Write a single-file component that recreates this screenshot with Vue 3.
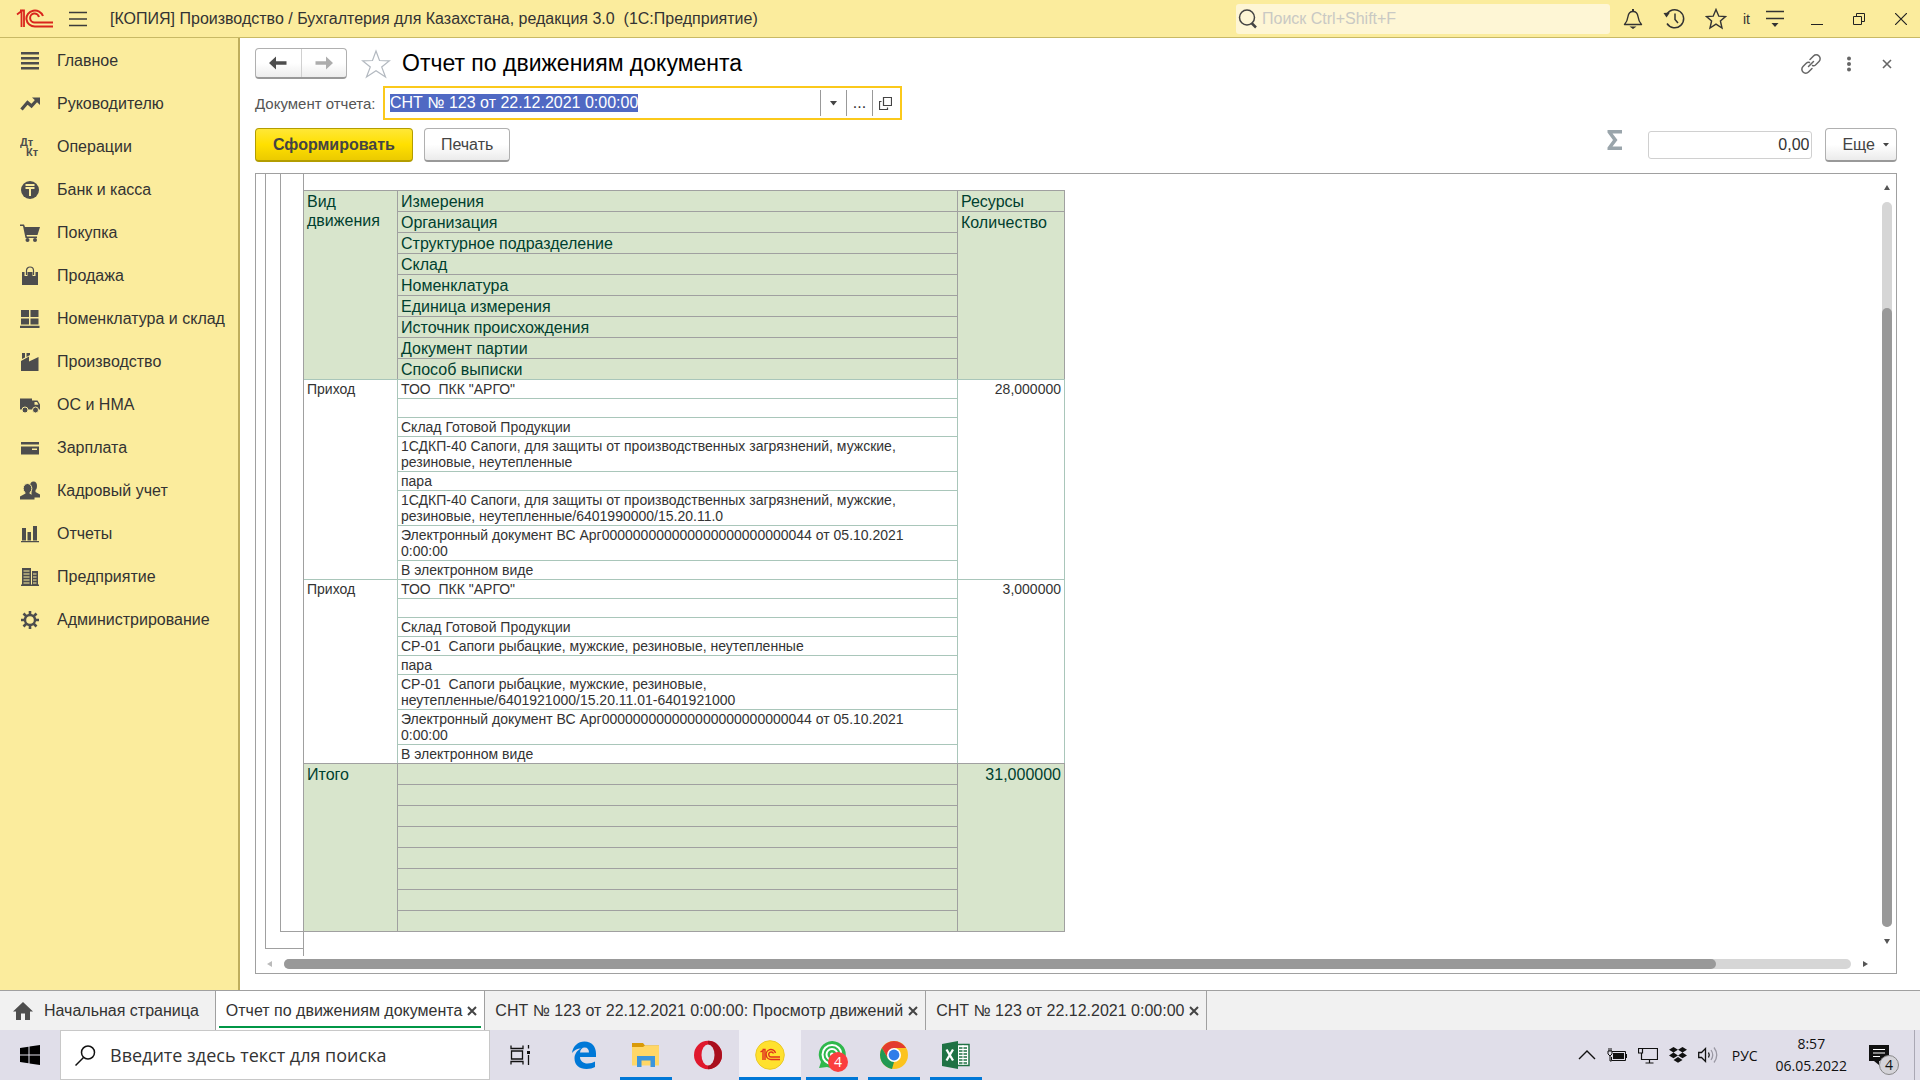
<template>
  <div class="desktop">
    <!-- Заголовок окна -->
    <header class="titlebar">
      <svg class="logo" width="38" height="20" viewBox="0 0 38 20" fill="none" stroke="#d9251d" stroke-width="2">
        <path d="M1 5.500 L5.500 2 V18 M4 1.500 H8 V18" stroke-width="1.800" />
        <path d="M27 7 A8.500 8 0 1 0 19 17.500 H37" />
        <path d="M23 8 A4.500 4.500 0 1 0 19 13.500 H37" />
      </svg>
      <button class="icon-btn burger" aria-label="Меню">
        <svg width="18" height="16" viewBox="0 0 18 16" stroke="#3b3b3b" stroke-width="1.300"><path d="M0 1.500H18M0 8H18M0 14.500H18" /></svg>
      </button>
      <h1 class="app-title">[КОПИЯ] Производство / Бухгалтерия для Казахстана, редакция 3.0&nbsp; (1С:Предприятие)</h1>
      <label class="global-search">
        <svg width="20" height="20" viewBox="0 0 20 20" fill="none" stroke="#444"><circle cx="9" cy="8.500" r="7.500" stroke-width="1.500" /><path d="M13.500 14L18 18.500" stroke-width="2.500" /></svg>
        <input type="text" placeholder="Поиск Ctrl+Shift+F" aria-label="Поиск" />
      </label>
      <nav class="window-tools">
        <button class="icon-btn" aria-label="Уведомления">
          <svg width="20" height="22" viewBox="0 0 20 22" fill="none" stroke="#333" stroke-width="1.400"><path d="M1.500 16.500C4 14 4.500 12 5 8.500C5.500 5 7 3.500 10 3.500S14.500 5 15 8.500C15.500 12 16 14 18.500 16.500Z" stroke-linejoin="round" /><path d="M10 1V4" stroke-width="2" /><path d="M6.500 18.500H13.500L10 21Z" fill="#333" stroke="none" /></svg>
        </button>
        <button class="icon-btn" aria-label="История">
          <svg width="22" height="22" viewBox="0 0 22 22" fill="none" stroke="#333" stroke-width="1.500"><path d="M3.500 7A9 9 0 1 1 4 15.500" /><path d="M12 5.500V11.500L15 15" /><path d="M0.500 5L7 4.500L3.500 9.500Z" fill="#333" stroke="none" /></svg>
        </button>
        <button class="icon-btn" aria-label="Избранное">
          <svg width="22" height="22" viewBox="0 0 22 22" fill="none" stroke="#333" stroke-width="1.400"><path d="M11 1.500L13.800 8.200L20.500 8.600L15.400 13L17 20L11 16.200L5 20L6.600 13L1.500 8.600L8.200 8.200Z" /></svg>
        </button>
        <span class="user">it</span>
        <button class="icon-btn" aria-label="Настройки">
          <svg width="18" height="18" viewBox="0 0 18 18" stroke="#333" stroke-width="1.400"><path d="M0 1.500H18M0 8.500H18" /><path d="M5.500 13H12.500L9 17Z" fill="#333" stroke="none" /></svg>
        </button>
        <button class="icon-btn wide" aria-label="Свернуть">
          <svg width="12" height="12" viewBox="0 0 12 12" stroke="#222"><path d="M0 11.500H12" /></svg>
        </button>
        <button class="icon-btn wide" aria-label="Восстановить">
          <svg width="12" height="12" viewBox="0 0 12 12" fill="none" stroke="#222"><path d="M0.500 3.500H8.500V11.500H0.500Z" /><path d="M3.500 3.500V0.500H11.500V8.500H8.500" /></svg>
        </button>
        <button class="icon-btn wide" aria-label="Закрыть">
          <svg width="12" height="12" viewBox="0 0 12 12" stroke="#222" stroke-width="1.200"><path d="M0 0L12 12M12 0L0 12" /></svg>
        </button>
      </nav>
    </header>

    <div class="workspace">
      <!-- Разделы -->
      <nav class="sidebar">
        <a v-for="item in sections" :key="item.title" href="#" class="section-link">
          <svg width="20" height="20" viewBox="0 0 20 20" fill="#4d4d4d" v-html="item.icon"></svg>
          <span>{{ item.title }}</span>
        </a>
      </nav>

      <main class="form">
        <div class="form-head">
          <div class="history-nav">
            <button aria-label="Назад">
              <svg width="18" height="14" viewBox="0 0 18 14"><path d="M0 7L7 0.500V5.200H17.500V8.800H7V13.500Z" fill="#4d4d4d" /></svg>
            </button>
            <button aria-label="Вперед">
              <svg width="18" height="14" viewBox="0 0 18 14"><path d="M18 7L11 0.500V5.200H0.500V8.800H11V13.500Z" fill="#adadad" /></svg>
            </button>
          </div>
          <button class="icon-btn fav" aria-label="В избранное">
            <svg width="30" height="30" viewBox="0 0 30 30" fill="#fff" stroke="#b3b9c0" stroke-width="1.200"><path d="M15 2L18.500 11.500L28.500 11.800L20.700 18L24.500 28L15 21.800L5.500 28L9.300 18L1.500 11.800L11.500 11.500Z" /></svg>
          </button>
          <h2>Отчет по движениям документа</h2>
          <div class="form-tools">
            <button class="icon-btn" aria-label="Ссылка">
              <svg width="20" height="20" viewBox="0 0 20 20" fill="none" stroke="#666" stroke-width="1.500" stroke-linecap="round"><path d="M9 5.500L12.500 2A3.700 3.700 0 0 1 18 7.500L14.500 11A3 3 0 0 1 11.500 11.500" /><path d="M11 14.500L7.500 18A3.700 3.700 0 0 1 2 12.500L5.500 9A3 3 0 0 1 8.500 8.500" /><path d="M7.500 12.500L12.500 7.500" /></svg>
            </button>
            <button class="icon-btn" aria-label="Еще действия">
              <svg width="6" height="16" viewBox="0 0 6 16" fill="#666"><circle cx="3" cy="2.500" r="2" /><circle cx="3" cy="8" r="2" /><circle cx="3" cy="13.500" r="2" /></svg>
            </button>
            <button class="icon-btn close" aria-label="Закрыть форму">
              <svg width="10" height="10" viewBox="0 0 10 10" stroke="#666" stroke-width="1.600"><path d="M1 1L9 9M9 1L1 9" /></svg>
            </button>
          </div>
        </div>

        <div class="param-row">
          <label for="doc">Документ отчета:</label>
          <div class="field">
            <input id="doc" ref="docInput" v-model="documentName" type="text" />
            <button aria-label="Выбрать из списка">
              <svg width="7" height="5" viewBox="0 0 7 5"><path d="M0 0H7L3.500 4.500Z" fill="#444" /></svg>
            </button>
            <button class="dots">...</button>
            <button aria-label="Открыть">
              <svg width="13" height="13" viewBox="0 0 13 13" fill="none" stroke="#444" stroke-width="1.200"><path d="M4.500 0.500H12.500V8.500H4.500Z" /><path d="M2.500 4.500H0.500V12.500H8.500V10.500" /></svg>
            </button>
          </div>
        </div>

        <div class="commands">
          <button class="btn primary">Сформировать</button>
          <button class="btn">Печать</button>
          <svg class="sigma" width="16" height="20" viewBox="0 0 16 20"><path d="M0.500 0H15V3.500H5.500L10.500 10L5.500 16.500H15V20H0.500V17.500L6 10L0.500 2.500Z" fill="#9aa5ab" /></svg>
          <input class="total" type="text" value="0,00" aria-label="Сумма" />
          <button class="btn more">Еще
            <svg width="6" height="4" viewBox="0 0 6 4"><path d="M0 0H6L3 3.500Z" fill="#444" /></svg>
          </button>
        </div>

        <!-- Табличный документ -->
        <section class="sheet">
          <div class="sheet-view">
            <div class="groups">
              <div class="group-outer">
                <div class="group-inner"></div>
              </div>
            </div>
            <div class="sheet-body">
              <table>
                <colgroup>
                  <col class="c-kind" />
                  <col class="c-dim" />
                  <col class="c-res" />
                </colgroup>
                <thead>
                  <tr v-for="(name, i) in dimensions" :key="name">
                    <th v-if="i === 0" :rowspan="dimensions.length">Вид движения</th>
                    <th>{{ name }}</th>
                    <th v-if="i === 0">Ресурсы</th>
                    <th v-if="i === 1" :rowspan="dimensions.length - 1">Количество</th>
                  </tr>
                </thead>
                <tbody v-for="(rec, r) in records" :key="r">
                  <tr v-for="(line, i) in rec.lines" :key="i">
                    <td v-if="i === 0" :rowspan="rec.lines.length">{{ rec.kind }}</td>
                    <td>{{ line }}</td>
                    <td v-if="i === 0" :rowspan="rec.lines.length" class="num">{{ rec.qty }}</td>
                  </tr>
                </tbody>
                <tfoot>
                  <tr v-for="n in 8" :key="n">
                    <td v-if="n === 1" rowspan="8">Итого</td>
                    <td></td>
                    <td v-if="n === 1" rowspan="8" class="num">31,000000</td>
                  </tr>
                </tfoot>
              </table>
            </div>
          </div>
          <div class="vscroll">
            <svg width="6" height="5" viewBox="0 0 6 5"><path d="M3 0L6 5H0Z" fill="#555" /></svg>
            <div class="track"><div class="thumb"></div></div>
            <svg width="6" height="5" viewBox="0 0 6 5"><path d="M0 0H6L3 5Z" fill="#555" /></svg>
          </div>
          <div class="hscroll">
            <svg width="5" height="6" viewBox="0 0 5 6"><path d="M5 0V6L0 3Z" fill="#bbb" /></svg>
            <div class="track"><div class="thumb"></div></div>
            <svg width="5" height="6" viewBox="0 0 5 6"><path d="M0 0L5 3L0 6Z" fill="#555" /></svg>
          </div>
        </section>
      </main>
    </div>

    <!-- Открытые окна -->
    <nav class="tabs">
      <a href="#" class="tab home">
        <svg width="20" height="18" viewBox="0 0 20 18" fill="#4d4d4d"><path d="M10 0L20 9.500H17V18H12V11.500H8V18H3V9.500H0Z" /></svg>
        Начальная страница
      </a>
      <div v-for="tab in tabs" :key="tab.title" class="tab" :class="{ active: tab.active }">
        <a href="#">{{ tab.title }}</a>
        <button class="icon-btn" aria-label="Закрыть вкладку">
          <svg width="10" height="10" viewBox="0 0 10 10" stroke="#444" stroke-width="2"><path d="M1 1L9 9M9 1L1 9" /></svg>
        </button>
      </div>
    </nav>

    <!-- Панель задач Windows -->
    <footer class="taskbar">
      <button class="icon-btn start" aria-label="Пуск">
        <svg width="20" height="20" viewBox="0 0 20 20"><path d="M0 3L8.500 1.800V9.500H0ZM9.500 1.600L20 0V9.500H9.500ZM0 10.500H8.500V18.200L0 17ZM9.500 10.500H20V20L9.500 18.400Z" /></svg>
      </button>
      <label class="task-search">
        <svg width="21" height="21" viewBox="0 0 21 21" fill="none" stroke="#111" stroke-width="1.500"><circle cx="13" cy="7.500" r="6.500" /><path d="M8.500 12.500L0.500 20.500" /></svg>
        <input type="text" placeholder="Введите здесь текст для поиска" aria-label="Поиск в Windows" />
      </label>
      <button class="task view" aria-label="Представление задач">
        <svg width="21" height="20" viewBox="0 0 21 20" fill="none" stroke="#111" stroke-width="1.300"><path d="M1 0.500V3.500H13V0.500M1.500 6H12.500V14H1.500ZM1 19.500V16.500H13V19.500M18.500 0V3.500M18.500 10V20" /><path d="M17 6H20V9H17Z" fill="#111" stroke="none" /></svg>
      </button>
      <button v-for="app in apps" :key="app.name" class="task" :class="{ running: app.running, current: app.current }" :aria-label="app.name">
        <svg width="30" height="30" viewBox="0 0 30 30" v-html="app.icon"></svg>
        <span v-if="app.badge" class="badge">{{ app.badge }}</span>
      </button>
      <div class="tray">
        <svg width="18" height="10" viewBox="0 0 18 10" fill="none" stroke="#111" stroke-width="1.400"><path d="M1 9L9 1L17 9" /></svg>
        <svg width="20" height="14" viewBox="0 0 20 14" fill="none" stroke="#111"><path d="M4.500 3.500H18.500V12.500H4.500V9" /><path d="M6 5H17V11H6ZM19 6H20V10H19Z" fill="#111" stroke="none" /><path d="M1 3H5V6L3 8L1 6Z" fill="#e0dee9" /><path d="M2 0V3M4 0V3M3 8V13H4.500" /></svg>
        <svg width="20" height="17" viewBox="0 0 20 17" fill="none" stroke="#111" stroke-width="1.200"><path d="M5 1.500H19.500V12.500H3.500V6M11.500 12.500V16M7.500 16H15.500" /><path d="M0.500 1.500H4.500V6H0.500Z" /></svg>
        <svg width="18" height="16" viewBox="0 0 18 16" fill="#111"><path d="M4.500 0L9 2.800L4.500 5.600L0 2.800ZM13.500 0L18 2.800L13.500 5.600L9 2.800ZM4.500 5.600L9 8.400L4.500 11.200L0 8.400ZM13.500 5.600L18 8.400L13.500 11.200L9 8.400ZM9 10L13.500 12.900L9 15.800L4.500 12.900Z" /></svg>
        <svg width="20" height="18" viewBox="0 0 20 18" fill="none" stroke="#111" stroke-width="1.300"><path d="M0.700 6.500H3.500L7.500 2.500V15.500L3.500 11.500H0.700Z" /><path d="M10.500 6.500Q12 9 10.500 11.500" /><path d="M13 4Q16.500 9 13 14M16 1.500Q21.500 9 16 16.500" stroke="#9a98a3" /></svg>
        <span class="lang">РУС</span>
        <time class="clock">8:57<br />06.05.2022</time>
        <button class="notes" aria-label="Центр уведомлений">
          <svg width="20" height="20" viewBox="0 0 20 20"><path d="M0 0H20V16H10V20L5 16H0Z" fill="#111" /><path d="M4 4.500H16M4 8H16M4 11.500H11" stroke="#fff" stroke-width="1.200" /></svg>
          <span>4</span>
        </button>
      </div>
    </footer>
  </div>
</template>

<script setup>
import { ref, onMounted } from 'vue';

const documentName = ref('СНТ № 123 от 22.12.2021 0:00:00');
const docInput = ref(null);

onMounted(() => {
  docInput.value.focus();
  docInput.value.select();
});

const sections = [
  { title: 'Главное', icon: '<path d="M1 1H19V3.500H1ZM1 6H19V8.500H1ZM1 11H19V13.500H1ZM1 16H19V18.500H1Z"/>' },
  { title: 'Руководителю', icon: '<path d="M1.500 15.500L7.500 8.500L11.500 12L17 6" fill="none" stroke="#4d4d4d" stroke-width="3.200"/><path d="M12 3.500H20V11Z"/>' },
  { title: 'Операции', icon: '<g font-family="Liberation Sans, sans-serif" font-weight="bold" font-size="11"><text x="0" y="9">Дт</text><text x="6" y="19">Кт</text></g>' },
  { title: 'Банк и касса', icon: '<circle cx="10" cy="10" r="9"/><path d="M5.500 5H14.500M5.500 8H14.500M10 8V16" stroke="#fbec9d" stroke-width="2"/>' },
  { title: 'Покупка', icon: '<path d="M0 1.500H4L5 4H20L17.500 12H6.500L7 13.500H17V15H5.500L3 3H0Z"/><circle cx="7.500" cy="17" r="2"/><circle cx="15" cy="17" r="2"/>' },
  { title: 'Продажа', icon: '<path d="M2 6H18V19H2Z"/><path d="M6 10V5A4 4 0 0 1 14 5V10" fill="none" stroke="#fbec9d" stroke-width="3"/><path d="M6.500 9V4.500A3.500 3.500 0 0 1 13.500 4.500V9" fill="none" stroke="#4d4d4d" stroke-width="1.200"/>' },
  { title: 'Номенклатура и склад', icon: '<path d="M1 1H9V8H1ZM10.500 1H18.500V8H10.500ZM1 9.500H9V15.500H1ZM10.500 9.500H18.500V15.500H10.500ZM0 16.800H19.500V19H0Z"/>' },
  { title: 'Производство', icon: '<path d="M1 19V9L9 4.500V9.500L18.500 5V19ZM2 1H5V5.500L2 7ZM6.500 1H10V3L6.500 5Z"/>' },
  { title: 'ОС и НМА', icon: '<path d="M0 3.500H12V14.500H0ZM13 5.500H17.500L20 9.500V14.500H12V5.500Z"/><path d="M14.500 7H17L18.500 9.800H14.500Z" fill="#fbec9d"/><circle cx="5" cy="15" r="3" stroke="#fbec9d"/><circle cx="15.500" cy="15" r="3" stroke="#fbec9d"/>' },
  { title: 'Зарплата', icon: '<path d="M1 4H19V6.500H1ZM1 8.500H19V16.500H1Z"/><path d="M12 10.500H17V12H12Z" fill="#fbec9d"/>' },
  { title: 'Кадровый учет', icon: '<ellipse cx="13.500" cy="5" rx="3.500" ry="4.500"/><path d="M11.500 9H15.500V11L20 13.500V16.500H11.500Z"/><ellipse cx="7.500" cy="7.500" rx="4.300" ry="5" stroke="#fbec9d"/><path d="M5.500 10.500H9.500V12.500L14.500 15.500V18.500H0V15.500L5.500 12.500Z"/>' },
  { title: 'Отчеты', icon: '<path d="M2 4H6V16.500H2ZM7.500 8H11V16.500H7.500ZM13 2H17V16.500H13ZM1 17H19V18.300H1Z"/>' },
  { title: 'Предприятие', icon: '<path d="M2 1H11V19H2ZM12 4H18V19H12ZM1 17.500H19V19H1Z"/><path d="M3.500 4H9.500M3.500 7H9.500M3.500 10H9.500M3.500 13H9.500M3.500 16H9.500M13 7H16.500M13 10H16.500M13 13H16.500M13 16H16.500" stroke="#fbec9d"/>' },
  { title: 'Администрирование', icon: '<circle cx="10" cy="10" r="5" fill="none" stroke="#4d4d4d" stroke-width="2.400"/><path d="M10 1V5M10 15V19M1 10H5M15 10H19M3.500 3.500L6.500 6.500M13.500 13.500L16.500 16.500M16.500 3.500L13.500 6.500M3.500 16.500L6.500 13.500" stroke="#4d4d4d" stroke-width="2.600"/>' }
];

const dimensions = [
  'Измерения',
  'Организация',
  'Структурное подразделение',
  'Склад',
  'Номенклатура',
  'Единица измерения',
  'Источник происхождения',
  'Документ партии',
  'Способ выписки'
];

const records = [
  {
    kind: 'Приход',
    qty: '28,000000',
    lines: [
      'ТОО  ПКК "АРГО"',
      '',
      'Склад Готовой Продукции',
      '1СДКП-40 Сапоги, для защиты от производственных загрязнений, мужские,\nрезиновые, неутепленные',
      'пара',
      '1СДКП-40 Сапоги, для защиты от производственных загрязнений, мужские,\nрезиновые, неутепленные/6401990000/15.20.11.0',
      'Электронный документ ВС Арг000000000000000000000000044 от 05.10.2021\n0:00:00',
      'В электронном виде'
    ]
  },
  {
    kind: 'Приход',
    qty: '3,000000',
    lines: [
      'ТОО  ПКК "АРГО"',
      '',
      'Склад Готовой Продукции',
      'СР-01  Сапоги рыбацкие, мужские, резиновые, неутепленные',
      'пара',
      'СР-01  Сапоги рыбацкие, мужские, резиновые,\nнеутепленные/6401921000/15.20.11.01-6401921000',
      'Электронный документ ВС Арг000000000000000000000000044 от 05.10.2021\n0:00:00',
      'В электронном виде'
    ]
  }
];

const tabs = [
  { title: 'Отчет по движениям документа', active: true },
  { title: 'СНТ № 123 от 22.12.2021 0:00:00: Просмотр движений' },
  { title: 'СНТ № 123 от 22.12.2021 0:00:00' }
];

const apps = [
  { name: 'Edge', icon: '<path d="M3 13C4 6 9 1.500 15.500 1.500C23 1.500 27 7 27 13.500V17H11C11 21 14.500 23.500 18.500 23.500C21.500 23.500 24 22.500 26 21.500V27C24 28.300 21 29 17.500 29C10.500 29 5.500 25 5.500 18.500C5.500 14 8 10.500 12 8.500C8 8.500 5 10.500 3 13ZM11 12.500H20C20 9.500 18.500 7.500 15.700 7.500C13 7.500 11.300 9.500 11 12.500Z" fill="#0078d7"/>' },
  { name: 'Проводник', running: true, icon: '<path d="M1 3H12L14 5.500H28V12H1Z" fill="#d99a08"/><path d="M1 7H12L14 5.500H28V25.500H1Z" fill="#ffd767"/><path d="M6 16H24V27H19.500V20.500H10.500V27H6Z" fill="#3c95dc"/>' },
  { name: 'Opera', icon: '<ellipse cx="15" cy="15" rx="14" ry="14.200" fill="#e0182d"/><path d="M15 0.800A14 14.200 0 0 1 15 29.200Z" fill="#a90f1d"/><ellipse cx="15" cy="15" rx="6.500" ry="10.500" fill="#e0dee9"/>' },
  { name: '1С:Предприятие', running: true, current: true, icon: '<circle cx="15" cy="15" r="14.300" fill="#ffe12e" stroke="#eac928"/><g fill="none" stroke="#e0301e" stroke-width="1.400"><path d="M5.500 12L8 10.500V20M7.500 9.500H10V20"/><path d="M20.500 13A4.800 5 0 1 0 16.500 19.500H25"/><path d="M18.500 13.500A2.500 2.500 0 1 0 16.500 17H25"/></g>' },
  { name: 'WhatsApp', running: true, badge: '4', icon: '<path d="M2 28L4 22A13.500 13.500 0 1 1 10 27Z" fill="#2fb84c"/><g fill="none" stroke="#fff" stroke-width="2"><circle cx="15" cy="14.500" r="9.500"/><circle cx="15" cy="14.500" r="5.500"/></g><circle cx="15" cy="14.500" r="2" fill="#fff"/>' },
  { name: 'Chrome', running: true, icon: '<circle cx="15" cy="15" r="14" fill="#fcc31e"/><path d="M2.900 8A14 14 0 0 1 27.100 8H15L9 18.500Z" fill="#e33b2e"/><path d="M2.900 8L9 18.500L15 22L13 28.900A14 14 0 0 1 2.900 8Z" fill="#229954"/><circle cx="15" cy="15" r="7" fill="#fff"/><circle cx="15" cy="15" r="5.400" fill="#2f7de9"/>' },
  { name: 'Excel', running: true, icon: '<path d="M16 4.500H28V25.500H16Z" fill="#fff" stroke="#1f7244" stroke-width="1.500"/><path d="M18 8H26M18 11H26M18 14H26M18 17H26M18 20H26M18 23H26" stroke="#1f7244" stroke-width="1.500"/><path d="M22 5V25" stroke="#fff" stroke-width="1"/><path d="M1 4L17 1V29L1 26Z" fill="#1f7244"/><path d="M5.500 9.500L12 20.500M12 9.500L5.500 20.500" stroke="#fff" stroke-width="2.300"/>' }
];
</script>

<style>
body {
  margin: 0;
}
</style>

<style scoped>
.desktop {
  display: flex;
  flex-direction: column;
  min-height: 100vh;
  font-family: "Liberation Sans", Arial, sans-serif;
  font-size: 16px;
  color: #333;
  background: #fff;
}

.desktop * {
  box-sizing: border-box;
}

button,
input {
  font: inherit;
  color: inherit;
}

a {
  color: inherit;
  text-decoration: none;
}

svg {
  display: block;
  flex: none;
}

.icon-btn {
  display: flex;
  align-items: center;
  justify-content: center;
  padding: 0;
  border: none;
  background: none;
}

/* Заголовок окна */
.titlebar {
  display: flex;
  align-items: center;
  height: 38px;
  padding: 0 8px 0 16px;
  background: #fbec9d;
  border-bottom: 1px solid #c8b965;
}

.burger {
  margin-left: 15px;
}

.app-title {
  flex: 1;
  margin: 0 0 0 23px;
  font-size: 16px;
  font-weight: normal;
  white-space: nowrap;
}

.global-search {
  display: flex;
  align-items: center;
  gap: 4px;
  width: 374px;
  height: 30px;
  padding-left: 2px;
  border-radius: 3px;
  background: #fef6d5;
}

.global-search input {
  flex: 1;
  padding: 0;
  border: none;
  outline: none;
  background: none;
}

.global-search input::placeholder {
  color: #c9c9c4;
  opacity: 1;
}

.window-tools {
  display: flex;
  align-items: center;
  gap: 20px;
  padding-left: 13px;
}

.user {
  margin: 0 -4px;
  font-size: 14px;
}

.icon-btn.wide {
  width: 22px;
}

.window-tools .wide:nth-of-type(5) {
  margin-left: 2px;
}

/* Разделы */
.workspace {
  display: flex;
  flex: 1;
}

.sidebar {
  flex: none;
  width: 240px;
  padding-top: 1px;
  background: #fbec9d;
  border-right: 2px solid #bfae5d;
}

.section-link {
  display: flex;
  align-items: center;
  gap: 17px;
  height: 43px;
  padding-left: 20px;
  white-space: nowrap;
}

/* Форма отчета */
.form {
  display: flex;
  flex: 1;
  flex-direction: column;
  min-width: 0;
  padding: 10px 23px 16px 15px;
}

.form-head {
  display: flex;
  align-items: center;
  height: 31px;
}

.history-nav {
  display: flex;
  width: 92px;
  height: 31px;
  border: 1px solid #b0b0b0;
  border-bottom: 2px solid #999;
  border-radius: 4px;
  background: linear-gradient(#fff 50%, #ededed);
}

.history-nav button {
  display: flex;
  flex: 1;
  align-items: center;
  justify-content: center;
  padding: 0;
  border: none;
  background: none;
}

.history-nav button + button {
  border-left: 1px solid #d0d0d0;
}

.fav {
  margin: 0 11px 0 14px;
}

.form-head h2 {
  flex: 1;
  margin: 0;
  font-size: 23px;
  font-weight: normal;
  color: #000;
}

.form-tools {
  display: flex;
  align-items: center;
  gap: 25px;
  padding-right: 5px;
}

.form-tools .close {
  margin-left: 5px;
}

.param-row {
  display: flex;
  align-items: center;
  gap: 4px;
  margin-top: 7px;
}

.param-row label {
  width: 124px;
  font-size: 15px;
  white-space: nowrap;
  color: #555;
}

.field {
  display: flex;
  align-items: center;
  width: 519px;
  height: 34px;
  border: 2px solid #fbc91b;
  background: #fff;
}

.field input {
  flex: 1;
  min-width: 0;
  height: 26px;
  padding: 0 5px;
  border: none;
  outline: none;
}

.field input::selection {
  color: #fff;
  background: #5069c3;
}

.field button {
  display: flex;
  align-items: center;
  justify-content: center;
  width: 26px;
  height: 26px;
  padding: 0;
  border: none;
  border-left: 1px solid #999;
  background: none;
}

.field button:last-child {
  width: 28px;
  padding-right: 2px;
}

.commands {
  display: flex;
  align-items: center;
  margin: 8px 0 11px;
}

.btn {
  height: 34px;
  padding: 0 16px;
  border: 1px solid #b0b0b0;
  border-bottom: 2px solid #999;
  border-radius: 4px;
  background: linear-gradient(#fff 50%, #ebebeb);
  color: #444;
}

.btn.primary {
  margin-right: 11px;
  padding: 0 17px;
  border-color: #b39d00;
  background: linear-gradient(#ffe737, #ffe000 50%, #ebca00);
  font-weight: bold;
}

.sigma {
  margin: 0 25px 10px auto;
}

.total {
  width: 164px;
  height: 28px;
  margin-right: 13px;
  padding: 0 2px;
  border: 1px solid #d0d0d0;
  border-radius: 3px;
  text-align: right;
}

.btn.more {
  display: flex;
  align-items: center;
  gap: 8px;
  padding: 0 7px 0 16px;
}

/* Табличный документ */
.sheet {
  display: grid;
  flex: 1;
  grid-template-columns: 1fr 18px;
  grid-template-rows: 1fr 17px;
  border: 1px solid #a0a0a0;
}

.sheet-view {
  display: flex;
}

.groups {
  display: flex;
  width: 47px;
  padding: 0 0 7px 9px;
}

.group-outer {
  display: flex;
  flex: 1;
  padding: 0 0 16px 14px;
  border: solid #a0a0a0;
  border-width: 0 0 1px 1px;
}

.group-inner {
  flex: 1;
  border: solid #a0a0a0;
  border-width: 0 0 1px 1px;
}

.sheet-body {
  padding: 16px 0 24px;
  border-left: 1px solid #a0a0a0;
}

table {
  width: 761px;
  table-layout: fixed;
  border-collapse: separate;
  border-spacing: 0;
}

.c-kind {
  width: 93px;
}

.c-dim {
  width: 560px;
}

.c-res {
  width: 108px;
}

th,
td {
  height: 19px;
  padding: 1px 3px;
  border: solid #a9c6ba;
  border-width: 1px 0 0 1px;
  font-size: 14px;
  line-height: 16px;
  font-weight: normal;
  text-align: left;
  vertical-align: top;
  white-space: pre-wrap;
}

th,
tfoot td {
  height: 21px;
  padding: 1px 3px 0;
  border-color: #a0a0a0;
  background: #d8e5cc;
  color: #003f2f;
  font-size: 16px;
  line-height: 19px;
}

th:first-child[rowspan],
td:first-child[rowspan] {
  border-left: none;
}

tr:first-child > :last-child,
th:last-child[rowspan] {
  border-right-width: 1px;
}

tfoot tr:last-child td,
tfoot td[rowspan] {
  border-bottom-width: 1px;
}

tfoot tr:last-child td {
  height: 22px;
}

.num {
  text-align: right;
}

.vscroll {
  display: flex;
  flex-direction: column;
  align-items: center;
  gap: 12px;
  padding: 11px 4px 12px;
}

.track {
  display: flex;
  flex: 1;
  border-radius: 5px;
  background: #d6d6d6;
}

.thumb {
  border-radius: 5px;
  background: #999;
}

.vscroll .track {
  flex-direction: column;
  justify-content: flex-end;
  width: 10px;
}

.vscroll .thumb {
  height: 85.4%;
}

.hscroll {
  display: flex;
  align-items: center;
  gap: 12px;
  padding: 0 10px 2px 11px;
}

.hscroll .track {
  height: 10px;
}

.hscroll .thumb {
  width: 91.4%;
}

/* Вкладки */
.tabs {
  display: flex;
  height: 40px;
  border-top: 1px solid #a0a0a0;
  background: #f1f1f1;
}

.tab {
  display: flex;
  align-items: center;
  gap: 5px;
  padding: 0 7px 0 10px;
  border-right: 1px solid #a0a0a0;
  white-space: nowrap;
}

.tab.home {
  gap: 11px;
  padding: 0 16px 0 13px;
}

.tab.active {
  background: linear-gradient(#009646, #009646) center bottom 2px / calc(100% - 6px) 2px no-repeat #fff;
}

/* Панель задач */
.taskbar {
  display: flex;
  height: 50px;
  background: #e0dee9;
  color: #111;
  font-family: "Open Sans", "Noto Sans", sans-serif;
}

.start {
  width: 60px;
}

.task-search {
  display: flex;
  align-items: center;
  gap: 14px;
  width: 430px;
  padding-left: 14px;
  border: 1px solid #c8c8c8;
  background: #fff;
}

.task-search input {
  flex: 1;
  padding: 0;
  border: none;
  outline: none;
  font-size: 18px;
}

.task-search input::placeholder {
  color: #333;
  opacity: 1;
}

.task {
  position: relative;
  display: flex;
  align-items: center;
  justify-content: center;
  width: 62px;
  padding: 0;
  border: none;
  background: none;
}

.task.view {
  width: 60px;
  margin-right: 3px;
}

.task.running {
  background: linear-gradient(#0078d7, #0078d7) center bottom / 52px 3px no-repeat;
}

.task.current {
  background: linear-gradient(#0078d7, #0078d7) center bottom / 100% 3px no-repeat #f1f0f6;
}

.badge {
  position: absolute;
  right: 15px;
  bottom: 8px;
  width: 20px;
  border-radius: 10px;
  background: #fa3e3e;
  color: #fff;
  font-size: 14px;
  line-height: 20px;
}

.tray {
  display: flex;
  align-items: center;
  gap: 11px;
  margin-left: auto;
  padding-right: 5px;
}

.lang {
  margin-left: 3px;
  font-size: 14px;
}

.clock {
  margin-left: 7px;
  font-size: 14px;
  line-height: 22px;
  text-align: center;
}

.notes {
  position: relative;
  align-self: stretch;
  display: flex;
  align-items: center;
  width: 46px;
  margin-left: 11px;
  padding: 0;
  border: none;
  border-right: 1px solid #aaa8b4;
  background: none;
}

.notes span {
  position: absolute;
  left: 10px;
  bottom: 5px;
  width: 20px;
  border: 1px solid #888;
  border-radius: 10px;
  background: #d4d3d8;
  font-size: 14px;
  line-height: 18px;
}
</style>
